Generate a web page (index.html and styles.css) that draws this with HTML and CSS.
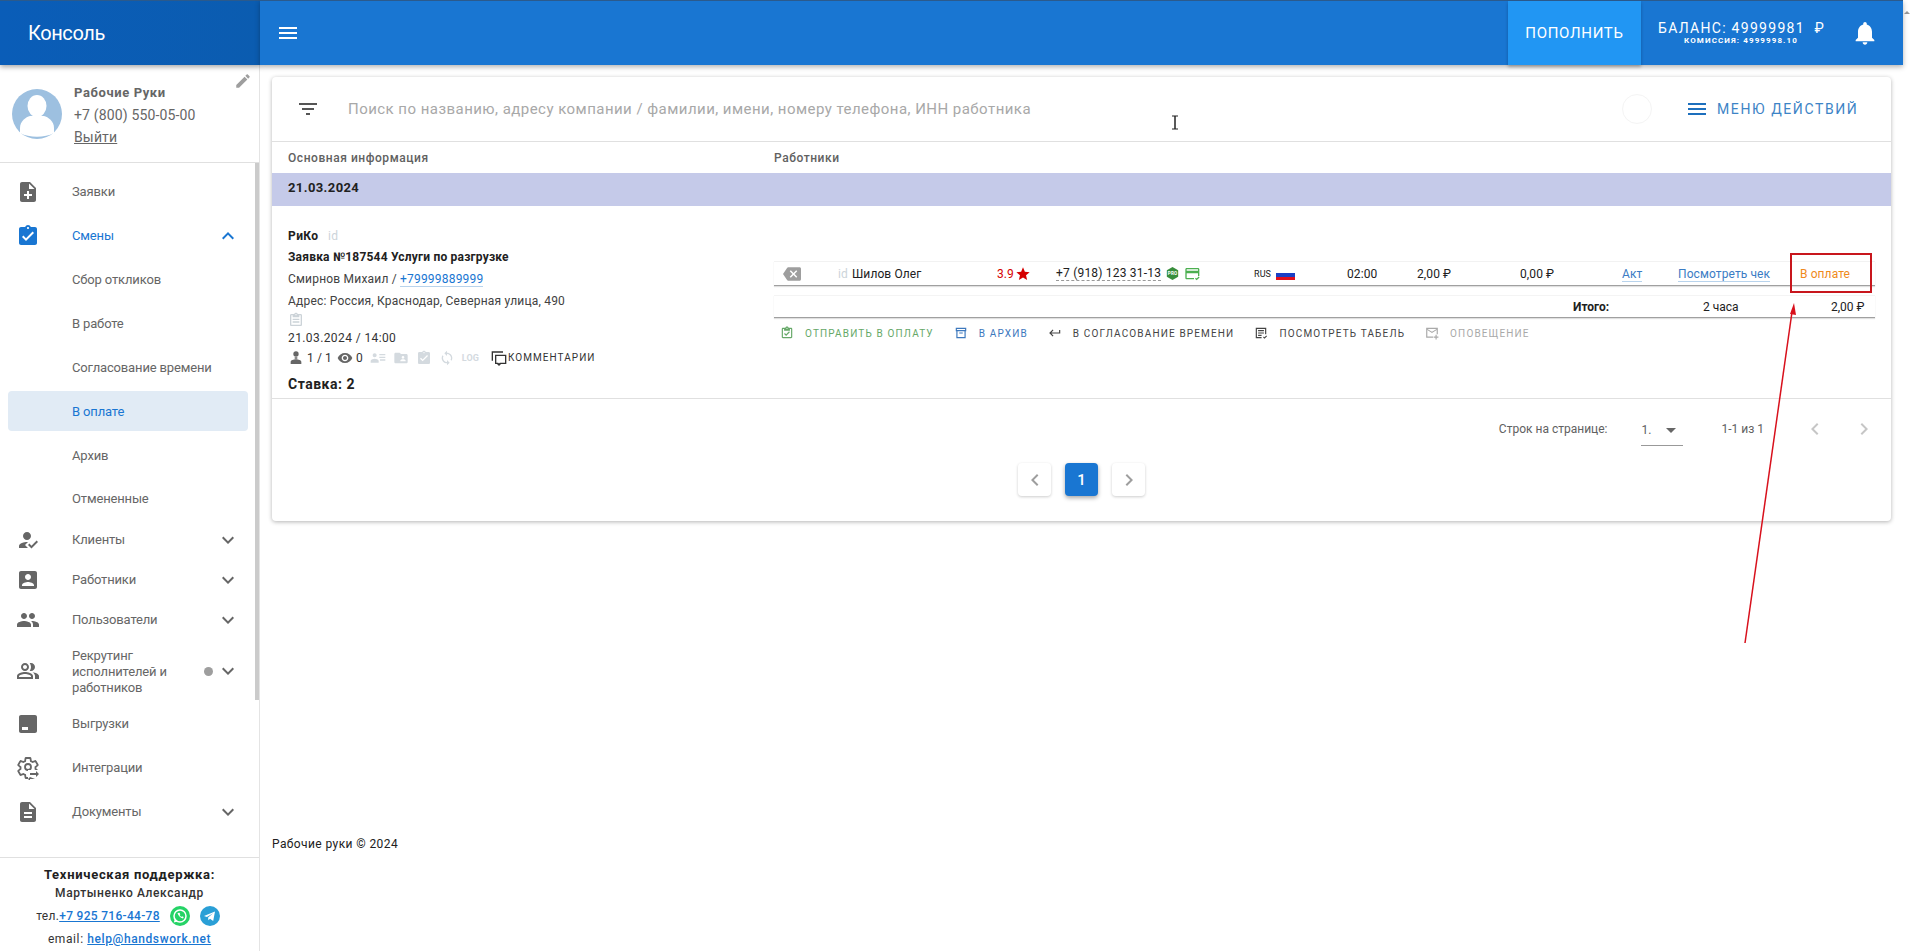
FILE: index.html
```html
<!DOCTYPE html>
<html>
<head>
    <title>Консоль</title>
    <link rel="stylesheet" href="styles.css">
</head>
<body>

<svg class="sprites">
    <symbol id="i-menu" viewBox="0 0 24 24"><path d="M3 18h18v-2H3v2zm0-5h18v-2H3v2zm0-7v2h18V6H3z"/></symbol>
    <symbol id="i-bell" viewBox="0 0 24 24"><path d="M12 22c1.1 0 2-.9 2-2h-4c0 1.1.89 2 2 2zm6-6v-5c0-3.07-1.64-5.64-4.5-6.32V4c0-.83-.67-1.5-1.5-1.5s-1.5.67-1.5 1.5v.68C7.63 5.36 6 7.92 6 11v5l-2 2v1h16v-1l-2-2z"/></symbol>
    <symbol id="i-edit" viewBox="0 0 24 24"><path d="M3 17.25V21h3.75L17.81 9.94l-3.75-3.75L3 17.25zM20.71 7.04c.39-.39.39-1.02 0-1.41l-2.34-2.34c-.39-.39-1.02-.39-1.41 0l-1.83 1.83 3.75 3.75 1.83-1.83z"/></symbol>
    <symbol id="i-note" viewBox="0 0 24 24"><path d="M14 2H6c-1.1 0-1.99.9-1.99 2L4 20c0 1.1.89 2 1.99 2H18c1.1 0 2-.9 2-2V8l-6-6zm2 14h-3v3h-2v-3H8v-2h3v-3h2v3h3v2zm-3-7V3.5L18.5 9H13z"/></symbol>
    <symbol id="i-turned" viewBox="0 0 24 24"><path d="M19 3h-4.18C14.4 1.84 13.3 1 12 1c-1.3 0-2.4.84-2.82 2H5c-1.1 0-2 .9-2 2v14c0 1.1.9 2 2 2h14c1.1 0 2-.9 2-2V5c0-1.1-.9-2-2-2zm-7 0c.55 0 1 .45 1 1s-.45 1-1 1-1-.45-1-1 .45-1 1-1zm-2 14l-4-4 1.41-1.41L10 14.17l6.59-6.59L18 9l-8 8z"/></symbol>
    <symbol id="i-reg" viewBox="0 0 24 24"><path d="M9 17l3-2.94c-.39-.04-.68-.06-1-.06-2.67 0-8 1.34-8 4v2h9l-3-3zm2-5c2.21 0 4-1.79 4-4s-1.79-4-4-4-4 1.79-4 4 1.79 4 4 4"/><path d="M15.47 20.5L12 17l1.4-1.41 2.07 2.08 5.13-5.17 1.4 1.41z"/></symbol>
    <symbol id="i-box" viewBox="0 0 24 24"><path d="M3 5v14c0 1.1.89 2 2 2h14c1.1 0 2-.9 2-2V5c0-1.1-.9-2-2-2H5c-1.11 0-2 .9-2 2zm12 4c0 1.66-1.34 3-3 3s-3-1.34-3-3 1.34-3 3-3 3 1.34 3 3zm-9 8c0-2 4-3.1 6-3.1s6 1.1 6 3.1v1H6v-1z"/></symbol>
    <symbol id="i-people" viewBox="0 0 24 24"><path d="M16 11c1.66 0 2.99-1.34 2.99-3S17.66 5 16 5c-1.66 0-3 1.34-3 3s1.34 3 3 3zm-8 0c1.66 0 2.99-1.34 2.99-3S9.66 5 8 5C6.34 5 5 6.34 5 8s1.34 3 3 3zm0 2c-2.33 0-7 1.17-7 3.5V19h14v-2.5c0-2.33-4.67-3.5-7-3.5zm8 0c-.29 0-.62.02-.97.05 1.16.84 1.97 1.97 1.97 3.45V19h6v-2.5c0-2.33-4.67-3.5-7-3.5z"/></symbol>
    <symbol id="i-people-alt" viewBox="0 0 24 24"><path d="M16.67 13.13C18.04 14.06 19 15.32 19 17v3h4v-3c0-2.18-3.57-3.47-6.33-3.87z"/><path d="M15 12c2.21 0 4-1.79 4-4s-1.79-4-4-4c-.47 0-.91.1-1.33.24C14.5 5.27 15 6.58 15 8s-.5 2.73-1.33 3.76c.42.14.86.24 1.33.24z"/><path d="M9 12c2.21 0 4-1.79 4-4s-1.79-4-4-4-4 1.79-4 4 1.79 4 4 4zm0-6c1.1 0 2 .9 2 2s-.9 2-2 2-2-.9-2-2 .9-2 2-2z"/><path d="M9 13c-2.67 0-8 1.34-8 4v3h16v-3c0-2.66-5.33-4-8-4zm6 5H3v-.99C3.2 16.29 6.3 15 9 15s5.8 1.29 6 2z"/></symbol>
    <symbol id="i-export" viewBox="0 0 24 24"><path d="M5 3h14c1.1 0 2 .9 2 2v14c0 1.1-.9 2-2 2H5c-1.1 0-2-.9-2-2V5c0-1.1.9-2 2-2zm1 12v3h6v-3H6z"/></symbol>
    <symbol id="i-gear" viewBox="0 0 24 24"><path fill="none" stroke="currentColor" stroke-width="1.8" d="M19.43 12.98c.04-.32.07-.64.07-.98s-.03-.66-.07-.98l2.11-1.65c.19-.15.24-.42.12-.64l-2-3.46c-.12-.22-.39-.3-.61-.22l-2.49 1c-.52-.4-1.08-.73-1.69-.98l-.38-2.65C14.46 2.18 14.25 2 14 2h-4c-.25 0-.46.18-.49.42l-.38 2.65c-.61.25-1.17.59-1.69.98l-2.49-1c-.23-.09-.49 0-.61.22l-2 3.46c-.13.22-.07.49.12.64l2.11 1.65c-.04.32-.07.65-.07.98s.03.66.07.98l-2.11 1.65c-.19.15-.24.42-.12.64l2 3.46c.12.22.39.3.61.22l2.49-1c.52.4 1.08.73 1.69.98l.38 2.65c.03.24.24.42.49.42h4c.25 0 .46-.18.49-.42l.38-2.65c.61-.25 1.17-.59 1.69-.98l2.49 1c.23.09.49 0 .61-.22l2-3.46c.12-.22.07-.49-.12-.64l-2.11-1.65z"/><circle cx="12" cy="11" r="3" fill="none" stroke="currentColor" stroke-width="1.8"/><path fill="#fff" d="M12 14h11v10H12z"/><path d="M14 17h6v-2l3 3-3 3v-2h-6zM19 23h-5v2l-2-2 2-2z"/></symbol>
    <symbol id="i-doc" viewBox="0 0 24 24"><path d="M14 2H6c-1.1 0-1.99.9-1.99 2L4 20c0 1.1.89 2 1.99 2H18c1.1 0 2-.9 2-2V8l-6-6zm2 16H8v-2h8v2zm0-4H8v-2h8v2zm-3-5V3.5L18.5 9H13z"/></symbol>
    <symbol id="i-more" viewBox="0 0 24 24"><path d="M16.59 8.59L12 13.17 7.41 8.59 6 10l6 6 6-6z"/></symbol>
    <symbol id="i-less" viewBox="0 0 24 24"><path d="M12 8l-6 6 1.41 1.41L12 10.83l4.59 4.58L18 14z"/></symbol>
    <symbol id="i-filter" viewBox="0 0 24 24"><path d="M10 18h4v-2h-4v2zM3 6v2h18V6H3zm3 7h12v-2H6v2z"/></symbol>
    <symbol id="i-backspace" viewBox="0 0 24 24"><path d="M22 3H7c-.69 0-1.23.35-1.59.88L0 12l5.41 8.11c.36.53.9.89 1.59.89h15c1.1 0 2-.9 2-2V5c0-1.1-.9-2-2-2zm-3 12.59L17.59 17 14 13.41 10.41 17 9 15.59 12.59 12 9 8.41 10.41 7 14 10.59 17.59 7 19 8.41 15.41 12 19 15.59z"/></symbol>
    <symbol id="i-star" viewBox="0 0 24 24"><path d="M12 17.27L18.18 21l-1.64-7.03L22 9.24l-7.19-.61L12 2 9.19 8.63 2 9.24l5.46 4.73L5.82 21z"/></symbol>
    <symbol id="i-eye" viewBox="0 0 24 24"><path d="M12 4.5C7 4.5 2.73 7.61 1 12c1.73 4.39 6 7.5 11 7.5s9.27-3.11 11-7.5c-1.73-4.39-6-7.5-11-7.5zM12 17c-2.76 0-5-2.24-5-5s2.24-5 5-5 5 2.24 5 5-2.24 5-5 5zm0-8c-1.66 0-3 1.34-3 3s1.34 3 3 3 3-1.34 3-3-1.34-3-3-3z"/></symbol>
    <symbol id="i-left" viewBox="0 0 24 24"><path d="M15.41 7.41L14 6l-6 6 6 6 1.41-1.41L10.83 12z"/></symbol>
    <symbol id="i-right" viewBox="0 0 24 24"><path d="M10 6L8.59 7.41 13.17 12l-4.58 4.59L10 18l6-6z"/></symbol>
    <symbol id="i-drop" viewBox="0 0 24 24"><path d="M7 10l5 5 5-5z"/></symbol>
    <symbol id="i-sync" viewBox="0 0 24 24"><path d="M12 4V1L8 5l4 4V6c3.31 0 6 2.69 6 6 0 1.01-.25 1.97-.7 2.8l1.46 1.46C19.54 15.03 20 13.57 20 12c0-4.42-3.58-8-8-8zm0 14c-3.31 0-6-2.69-6-6 0-1.01.25-1.97.7-2.8L5.24 7.74C4.46 8.97 4 10.43 4 12c0 4.42 3.58 8 8 8v3l4-4-4-4v3z"/></symbol>
    <symbol id="i-folder" viewBox="0 0 24 24"><path d="M20 6h-8l-2-2H4c-1.1 0-1.99.9-1.99 2L2 18c0 1.1.9 2 2 2h16c1.1 0 2-.9 2-2V8c0-1.1-.9-2-2-2zm-5 3c1.1 0 2 .9 2 2s-.9 2-2 2-2-.9-2-2 .9-2 2-2zm4 8h-8v-1c0-1.33 2.67-2 4-2s4 .67 4 2v1z"/></symbol>
    <symbol id="i-list" viewBox="0 0 24 24"><path d="M7 11c1.66 0 3-1.34 3-3S8.66 5 7 5 4 6.34 4 8s1.34 3 3 3zm0 2c-2 0-6 1-6 3.2V19h12v-2.800C13 14 9 13 7 13zM14 6h9v2h-9zM14 10h9v2h-9zM15 14h8v2h-8z"/></symbol>
    <symbol id="i-person" viewBox="0 0 24 24"><circle cx="12" cy="6" r="4"/><path d="M10 11h4v2h-4zM12 14c-3.500 0-8 1.500-8 4v3h16v-3c0-2.500-4.500-4-8-4z"/></symbol>
    <symbol id="i-clip" viewBox="0 0 24 24"><path d="M19 3h-4.180C14.400 1.840 13.300 1 12 1s-2.400.84-2.820 2H5c-1.100 0-2 .9-2 2v14c0 1.100.9 2 2 2h14c1.100 0 2-.9 2-2V5c0-1.100-.9-2-2-2zm-7 0c.55 0 1 .45 1 1s-.45 1-1 1-1-.45-1-1 .45-1 1-1zm7 16H5V5h2v3h10V5h2v14zM7 10h10v2H7zM7 14h10v2H7z"/></symbol>
    <symbol id="i-clip-ok" viewBox="0 0 24 24"><path d="M19 3h-4.180C14.400 1.840 13.300 1 12 1s-2.400.84-2.820 2H5c-1.100 0-2 .9-2 2v14c0 1.100.9 2 2 2h14c1.100 0 2-.9 2-2V5c0-1.100-.9-2-2-2zm-7 0c.55 0 1 .45 1 1s-.45 1-1 1-1-.45-1-1 .45-1 1-1zm7 16H5V5h2v3h10V5h2v14z"/><path d="M10.500 17L7 13.500l1.400-1.400 2.100 2.100 5-5 1.400 1.400z"/></symbol>
    <symbol id="i-archive" viewBox="0 0 24 24"><path d="M3 3h18v6h-1v12H4V9H3V3zm2 2v2h14V5H5zm1 4v10h12V9H6zm3 2h6v2H9z"/></symbol>
    <symbol id="i-return" viewBox="0 0 24 24"><path d="M19 7v4H5.830l3.580-3.590L8 6l-6 6 6 6 1.410-1.410L5.830 13H21V7z"/></symbol>
    <symbol id="i-sheet" viewBox="0 0 24 24"><path d="M3 3h18v11h-2V5H5v14h8v2H3V3zm4 4h10v2H7zM7 11h10v2H7zM7 15h6v2H7zM15.500 19.500l1.400-1.400 1.100 1.100 3-3 1.400 1.400-4.400 4.400z"/></symbol>
    <symbol id="i-mail" viewBox="0 0 24 24"><path d="M2 3h20v11h-2V7l-8 5-8-5v11h10v2H2V3zm2 2l8 5 8-5H4zM18 15h2v3h3v2h-3v3h-2v-3h-3v-2h3z"/></symbol>
    <symbol id="i-chat" viewBox="0 0 24 24"><path d="M1 2h17v2H3v12H1V2zm5 5h17v14h-8l-3 3-3-3H6V7zm2 2v10h2.800l1.200 1.200 1.200-1.200H21V9H8z"/></symbol>
    <symbol id="i-card" viewBox="0 0 24 24"><path d="M4 3h17c1.100 0 2 .9 2 2v10h-2v-4H4v7h11v2H4c-1.100 0-2-.9-2-2V5c0-1.100.9-2 2-2zm0 2v2h17V5H4zM16.500 19l1.400-1.400 1.100 1.100 3-3 1.400 1.400-4.400 4.400z"/></symbol>
</svg>

<div class="app">
    <div class="brand">Консоль</div>
    <header class="topbar">
        <svg class="ico burger"><use href="#i-menu"/></svg>
        <div class="topbar-right">
            <div class="refill">ПОПОЛНИТЬ</div>
            <div class="balance">
                <div class="balance-main">БАЛАНС: 49999981 &nbsp;₽</div>
                <div class="balance-sub">КОМИССИЯ: 4999998.10</div>
            </div>
            <svg class="ico bell"><use href="#i-bell"/></svg>
        </div>
    </header>

    <aside class="sidebar">
        <div class="profile">
            <svg class="avatar" viewBox="0 0 50 50">
                <circle cx="25" cy="25" r="25" fill="#9dc0e0"/>
                <ellipse cx="25" cy="17" rx="9.500" ry="11" fill="#fff"/>
                <path d="M8 44v-5c0-7 6-11 10-12h14c4 1 10 5 10 12v5c-9 5-25 5-34 0z" fill="#fff"/>
            </svg>
            <div class="profile-text">
                <div class="profile-name">Рабочие Руки</div>
                <div class="profile-line">+7 (800) 550-05-00</div>
                <div class="profile-line"><u>Выйти</u></div>
            </div>
            <svg class="ico pencil"><use href="#i-edit"/></svg>
        </div>

        <nav class="nav">
            <div class="nav-item"><svg class="ico"><use href="#i-note"/></svg><span>Заявки</span></div>
            <div class="nav-item is-open"><svg class="ico"><use href="#i-turned"/></svg><span>Смены</span><svg class="ico chev"><use href="#i-less"/></svg></div>
            <div class="nav-sub">Сбор откликов</div>
            <div class="nav-sub">В работе</div>
            <div class="nav-sub">Согласование времени</div>
            <div class="nav-sub is-current"><b>В оплате</b></div>
            <div class="nav-sub">Архив</div>
            <div class="nav-sub tail">Отмененные</div>
            <div class="nav-item short"><svg class="ico"><use href="#i-reg"/></svg><span>Клиенты</span><svg class="ico chev"><use href="#i-more"/></svg></div>
            <div class="nav-item short"><svg class="ico"><use href="#i-box"/></svg><span>Работники</span><svg class="ico chev"><use href="#i-more"/></svg></div>
            <div class="nav-item short"><svg class="ico"><use href="#i-people"/></svg><span>Пользователи</span><svg class="ico chev"><use href="#i-more"/></svg></div>
            <div class="nav-item tall"><svg class="ico"><use href="#i-people-alt"/></svg><span>Рекрутинг исполнителей и работников</span><i class="dot"></i><svg class="ico chev"><use href="#i-more"/></svg></div>
            <div class="nav-item"><svg class="ico"><use href="#i-export"/></svg><span>Выгрузки</span></div>
            <div class="nav-item"><svg class="ico"><use href="#i-gear"/></svg><span>Интеграции</span></div>
            <div class="nav-item"><svg class="ico"><use href="#i-doc"/></svg><span>Документы</span><svg class="ico chev"><use href="#i-more"/></svg></div>
            <div class="nav-thumb"></div>
        </nav>

        <div class="support">
            <div class="support-title">Техническая поддержка:</div>
            <div class="support-name">Мартыненко Александр</div>
            <div class="support-phone">
                <span>тел.<a>+7 925 716-44-78</a></span>
                <svg class="messenger" viewBox="0 0 20 20"><circle cx="10" cy="10" r="10" fill="#25d366"/><circle cx="10" cy="10" r="6" fill="none" stroke="#fff" stroke-width="1.500"/><path d="M3.800 16.500l1.200-4 3 3z" fill="#fff"/><path d="M7.500 7c1 3 2.500 4.500 5.500 5.500l.7-1.500-1.700-.8-.7.7c-.8-.4-1.300-1-1.700-1.800l.7-.7-.8-1.700z" fill="#fff"/></svg>
                <svg class="messenger" viewBox="0 0 20 20"><circle cx="10" cy="10" r="10" fill="#2a9fd6"/><path d="M4 10l11-4.500-1.800 9.500-3.200-2.300-1.600 1.600-.3-2.900 5-4.200-6.200 3.700z" fill="#fff"/></svg>
            </div>
            <div class="support-mail">email: <a>help@handswork.net</a></div>
        </div>
    </aside>

    <main class="content">
        <section class="card">
            <div class="searchbar">
                <svg class="ico filter"><use href="#i-filter"/></svg>
                <div class="placeholder">Поиск по названию, адресу компании / фамилии, имени, номеру телефона, ИНН работника</div>
                <div class="ghost"></div>
                <svg class="ico actions-ico"><use href="#i-menu"/></svg>
                <div class="actions-label">МЕНЮ ДЕЙСТВИЙ</div>
            </div>

            <div class="table-head">
                <div class="col-main">Основная информация</div>
                <div>Работники</div>
            </div>
            <div class="date-band">21.03.2024</div>

            <div class="order">
                <div class="col-main order-info">
                    <div class="info-company">РиКо <span class="muted">id</span></div>
                    <div class="info-title">Заявка №187544 Услуги по разгрузке</div>
                    <div class="info-line">Смирнов Михаил / <a class="dash-link">+79999889999</a></div>
                    <div class="info-line">Адрес: Россия, Краснодар, Северная улица, 490</div>
                    <svg class="ico clip"><use href="#i-clip"/></svg>
                    <div class="info-date">21.03.2024 / 14:00</div>
                    <div class="info-icons">
                        <svg class="ico dim"><use href="#i-person"/></svg><span class="count">1 / 1</span>
                        <svg class="ico dim eye"><use href="#i-eye"/></svg><span class="count">0</span>
                        <svg class="ico faded"><use href="#i-list"/></svg>
                        <svg class="ico faded"><use href="#i-folder"/></svg>
                        <svg class="ico faded"><use href="#i-turned"/></svg>
                        <svg class="ico faded"><use href="#i-sync"/></svg>
                        <span class="log">LOG</span>
                        <svg class="ico chat"><use href="#i-chat"/></svg><span class="comments">КОММЕНТАРИИ</span>
                    </div>
                    <div class="info-rate">Ставка: 2</div>
                </div>

                <div class="workers">
                    <div class="worker-row">
                        <svg class="ico remove"><use href="#i-backspace"/></svg>
                        <div class="worker-name"><span class="muted">id</span> Шилов Олег</div>
                        <div class="rating">3.9 <svg class="ico"><use href="#i-star"/></svg></div>
                        <div class="phone"><span>+7 (918) 123 31-13</span>
                            <svg class="pro" viewBox="0 0 20 20"><path d="M10 0l8.700 5v10L10 20l-8.700-5V5z" fill="#388e3c"/><text x="10" y="13" text-anchor="middle">PRO</text></svg>
                            <svg class="ico card-ok"><use href="#i-card"/></svg>
                        </div>
                        <div class="country">RUS <span class="flag"></span></div>
                        <div>02:00</div>
                        <div>2,00 ₽</div>
                        <div>0,00 ₽</div>
                        <div><a class="solid-link">Акт</a></div>
                        <div><a class="solid-link">Посмотреть чек</a></div>
                        <div class="status">В оплате</div>
                    </div>
                    <div class="total-row">
                        <div></div>
                        <b>Итого:</b>
                        <div>2 часа</div>
                        <div>2,00 ₽</div>
                    </div>
                    <div class="worker-actions">
                        <div class="act green"><svg class="ico"><use href="#i-clip-ok"/></svg>Отправить в оплату</div>
                        <div class="act blue"><svg class="ico"><use href="#i-archive"/></svg>В архив</div>
                        <div class="act dark"><svg class="ico"><use href="#i-return"/></svg>В согласование времени</div>
                        <div class="act dark"><svg class="ico"><use href="#i-sheet"/></svg>Посмотреть табель</div>
                        <div class="act grey"><svg class="ico"><use href="#i-mail"/></svg>Оповещение</div>
                    </div>
                </div>
            </div>

            <div class="rows-bar">
                <span>Строк на странице:</span>
                <div class="rows-select"><span>1.</span><svg class="ico"><use href="#i-drop"/></svg></div>
                <span class="rows-range">1-1 из 1</span>
                <svg class="ico off"><use href="#i-left"/></svg>
                <svg class="ico off"><use href="#i-right"/></svg>
            </div>

            <div class="pager">
                <div class="page-btn"><svg class="ico"><use href="#i-left"/></svg></div>
                <div class="page-btn active">1</div>
                <div class="page-btn"><svg class="ico"><use href="#i-right"/></svg></div>
            </div>
        </section>

        <footer class="copy">Рабочие руки © 2024</footer>
    </main>

    <div class="gutter"><i></i></div>
</div>

<!-- annotation drawn on top of the screenshot -->
<svg class="markup" viewBox="0 0 1911 951">
    <rect x="1791" y="254" width="80" height="38" fill="none" stroke="#c8161d" stroke-width="2"/>
    <path d="M1745 643L1792 312" stroke="#d8101c" stroke-width="1.500"/>
    <path d="M1794 303l-4 11 6 1z" fill="#d8101c"/>
    <path d="M1172 116h3v13h-3m6-13h-3v13h3" fill="none" stroke="#222" stroke-width="1"/>
</svg>

</body>
</html>
```

FILE: styles.css
```css
* {
    box-sizing: border-box;
}

body {
    margin: 0;
    height: 951px;
    overflow: hidden;
    background: #fff;
    color: #212121;
    font-family: Roboto, "Liberation Sans", sans-serif;
    font-size: 12px;
}

a {
    color: inherit;
}

.sprites {
    display: none;
}

.ico {
    display: block;
    flex: none;
    width: 24px;
    height: 24px;
    fill: currentColor;
}

.app {
    display: grid;
    grid-template-columns: 260px minmax(0, 1fr) 8px;
    grid-template-rows: 65px 886px;
    height: 951px;
}

/* top bar */
.brand {
    display: flex;
    align-items: center;
    padding-left: 28px;
    background: linear-gradient(90deg, #0a5db8, #0b5cb0);
    border-top: 1px solid #2b5a8c;
    color: #fff;
    font-size: 20px;
    letter-spacing: -.4px;
    box-shadow: 0 2px 5px rgba(0, 0, 0, .35);
    z-index: 2;
}

.topbar {
    display: flex;
    align-items: center;
    justify-content: space-between;
    padding-left: 16px;
    background: #1976d2;
    border-top: 1px solid #2b5a8c;
    color: #fff;
    box-shadow: 0 2px 5px rgba(0, 0, 0, .3);
    z-index: 2;
}

.burger {
    width: 24px;
}

.topbar-right {
    display: flex;
    align-items: center;
    height: 100%;
}

.refill {
    display: flex;
    align-items: center;
    width: 133px;
    height: 100%;
    justify-content: center;
    background: #2196f3;
    font-size: 15px;
    letter-spacing: .7px;
    box-shadow: 0 2px 3px rgba(0, 0, 0, .25);
}

.balance {
    width: 210px;
    padding: 0 27px 0 17px;
    text-align: center;
}

.balance-main {
    font-size: 14px;
    letter-spacing: 1.3px;
    line-height: 15px;
    white-space: nowrap;
    text-align: left;
}

.balance-sub {
    font-size: 8px;
    font-weight: 700;
    letter-spacing: 1.1px;
    line-height: 10px;
}

.bell {
    width: 28px;
    height: 28px;
    margin-right: 24px;
}

/* sidebar */
.sidebar {
    display: flex;
    flex-direction: column;
    position: relative;
    border-right: 1px solid #e4e4e4;
    color: #666;
    font-size: 13px;
}

.profile {
    display: flex;
    position: relative;
    height: 98px;
    padding: 24px 0 0 12px;
    border-bottom: 1px solid #e0e0e0;
}

.avatar {
    flex: none;
    width: 50px;
    height: 50px;
}

.profile-text {
    margin-left: 12px;
    margin-top: -7px;
    font-size: 14px;
    line-height: 22px;
    letter-spacing: .15px;
}

.profile-name {
    font-size: 13px;
    font-weight: 700;
    letter-spacing: .6px;
}

.pencil {
    position: absolute;
    top: 7px;
    right: 7px;
    width: 18px;
    height: 18px;
    color: #9e9e9e;
}

.nav {
    position: relative;
    flex: 1;
    padding-top: 7px;
}

.nav-thumb {
    position: absolute;
    top: 0;
    right: 0;
    width: 4px;
    height: 537px;
    background: #cbcbcb;
}

.nav-item {
    display: flex;
    align-items: center;
    height: 44px;
    padding-left: 16px;
    line-height: 16px;
}

.nav-item > span {
    margin-left: 32px;
    width: 104px;
    letter-spacing: -.15px;
}

.nav-item > .ico {
    color: #666;
}

.nav-item.short {
    height: 40px;
}

.nav-item.tall {
    height: 62px;
}

.nav-item.tall > span {
    margin-top: 2px;
}

.nav-item.is-open {
    height: 43px;
}

.nav-item.is-open,
.nav-item.is-open > .ico {
    color: #1976d2;
}

.nav-item > .chev {
    position: absolute;
    left: 216px;
}

.dot {
    position: absolute;
    left: 204px;
    width: 9px;
    height: 9px;
    border-radius: 50%;
    background: #9e9e9e;
}

.nav-sub {
    display: flex;
    align-items: center;
    height: 44px;
    padding-left: 72px;
    letter-spacing: -.15px;
}

.nav-sub.tail {
    height: 43px;
}

.nav-sub b {
    font-weight: 400;
}

.nav-sub.is-current {
    height: 40px;
    margin: 2px 11px 2px 8px;
    padding-left: 64px;
    border-radius: 4px;
    background: #e1ebf5;
    color: #1976d2;
}

.support {
    height: 94px;
    padding-top: 7px;
    border-top: 1px solid #e0e0e0;
    color: #333;
    text-align: center;
    letter-spacing: .6px;
}

.support-title {
    font-size: 13px;
    font-weight: 700;
    line-height: 19px;
    color: #212121;
    letter-spacing: .7px;
}

.support-name {
    font-size: 12px;
    font-weight: 500;
    line-height: 19px;
}

.support-phone {
    display: flex;
    align-items: center;
    justify-content: center;
    gap: 4px;
    height: 25px;
    padding-right: 3px;
    font-size: 12px;
    letter-spacing: .3px;
}

.support-phone a,
.support-mail a {
    color: #1976d2;
    font-weight: 500;
    text-decoration: underline;
}

.messenger {
    width: 20px;
    height: 20px;
    margin-left: 6px;
}

.support-mail {
    margin-top: 1px;
    font-size: 12px;
    line-height: 21px;
}

/* main card */
.content {
    padding: 12px 12px 0;
}

.card {
    height: 444px;
    background: #fff;
    border-radius: 4px;
    box-shadow: 0 1px 4px rgba(0, 0, 0, .3);
}

.searchbar {
    display: flex;
    align-items: center;
    height: 65px;
    border-bottom: 1px solid #e0e0e0;
}

.filter {
    margin-left: 24px;
    color: #555;
}

.placeholder {
    margin-left: 28px;
    flex: 1;
    color: #a8a8a8;
    font-size: 15px;
    letter-spacing: .46px;
}

.ghost {
    width: 30px;
    height: 30px;
    margin-right: 33px;
    border: 1px solid #f4f4f4;
    border-radius: 50%;
}

.actions-ico {
    color: #1d6fbd;
}

.actions-label {
    width: 182px;
    padding-left: 8px;
    color: #3d84c6;
    font-size: 14px;
    letter-spacing: 1.6px;
}

.table-head {
    display: flex;
    align-items: center;
    height: 31px;
    color: #616161;
    font-weight: 500;
    letter-spacing: .55px;
}

.col-main {
    width: 502px;
    padding-left: 16px;
    flex: none;
}

.date-band {
    height: 33px;
    padding-left: 16px;
    background: #c5cae9;
    font-size: 13px;
    font-weight: 700;
    letter-spacing: .4px;
    line-height: 29px;
}

.order {
    display: flex;
    height: 193px;
    border-bottom: 1px solid #e0e0e0;
}

.order-info {
    padding-top: 20px;
    line-height: 22px;
}

.info-company {
    font-weight: 700;
    letter-spacing: .4px;
    line-height: 20px;
}

.muted {
    margin-left: 6px;
    color: #ccd4da;
    font-weight: 400;
}

.info-title {
    font-weight: 700;
    letter-spacing: .2px;
}

.info-line {
    color: #424242;
    letter-spacing: .2px;
}

.dash-link {
    color: #1976d2;
    border-bottom: 1px solid #b8d3ec;
}

.clip {
    width: 16px;
    height: 16px;
    color: #ccd3d8;
}

.info-date {
    line-height: 20px;
    color: #333;
    letter-spacing: .4px;
}

.info-icons {
    display: flex;
    align-items: center;
    height: 20px;
    color: #333;
    letter-spacing: .1px;
}

.info-icons .ico {
    width: 16px;
    height: 16px;
}

.dim {
    color: #666;
}

.info-icons .eye {
    margin-left: 5px;
}

.count {
    margin-left: 3px;
}

.faded {
    margin-left: 7px;
    color: #d4dadf;
}

.log {
    margin-left: 7px;
    color: #d4dadf;
    font-size: 9px;
    font-weight: 700;
}

.info-icons .chat {
    margin-left: 12px;
    color: #333;
}

.comments {
    margin-left: 1px;
    font-size: 10px;
    letter-spacing: 1.05px;
    color: #333;
}

.info-rate {
    margin-top: 5px;
    font-size: 14px;
    font-weight: 700;
    letter-spacing: .5px;
}

/* workers table */
.workers {
    flex: 1;
    min-width: 0;
    padding: 55px 16px 0 0;
}

.worker-row,
.total-row {
    display: grid;
    align-items: center;
    border-bottom: 1px solid #a0a0a0;
    box-shadow: 0 1px 1px rgba(0, 0, 0, .12);
}

.worker-row {
    grid-template-columns: 64px 159px 58px 199px 93px 70px 103px 102px 56px 122px 1fr;
    height: 25px;
    border-top: 1px solid #f2f2f2;
    letter-spacing: .1px;
}

.remove {
    width: 18px;
    height: 18px;
    margin-left: 9px;
    color: #9e9e9e;
}

.worker-name .muted {
    margin-left: 0;
    margin-right: 1px;
}

.rating {
    display: flex;
    align-items: center;
    gap: 1px;
    color: #d50000;
}

.rating .ico {
    width: 16px;
    height: 16px;
}

.phone {
    display: flex;
    align-items: center;
    gap: 5px;
    margin-left: 1px;
    letter-spacing: .2px;
}

.phone > span {
    border-bottom: 1px dashed #999;
}

.pro {
    width: 13px;
    height: 13px;
}

.pro text {
    fill: #fff;
    font-size: 7px;
    font-weight: 700;
}

.card-ok {
    width: 16px;
    height: 16px;
    color: #4caf50;
}

.country {
    display: flex;
    align-items: center;
    gap: 5px;
    font-size: 9px;
}

.flag {
    width: 19px;
    height: 10px;
    margin-top: 2px;
    background: linear-gradient(#fff 33%, #1a3fc4 33% 66%, #e0101c 66%);
}

.solid-link {
    color: #3b7cc4;
    border-bottom: 1px solid #b8d3ec;
}

.status {
    color: #ef8a1d;
}

.total-row {
    grid-template-columns: 799px 130px 128px 1fr;
    height: 23px;
    margin-top: 9px;
    border-top: 1px solid #f4f4f4;
}

.worker-actions {
    display: flex;
    align-items: center;
    height: 30px;
    padding-left: 6px;
}

.act {
    display: flex;
    align-items: center;
    gap: 11px;
    margin-right: 20px;
    font-size: 10px;
    letter-spacing: 1.15px;
    text-transform: uppercase;
}

.act .ico {
    width: 14px;
    height: 14px;
}

.green {
    color: #66a868;
}

.blue {
    color: #3d78bd;
}

.dark {
    color: #444;
}

.grey {
    color: #a9a9a9;
}

/* pagination */
.rows-bar {
    display: flex;
    align-items: center;
    justify-content: flex-end;
    height: 60px;
    padding-right: 15px;
    color: #616161;
}

.rows-select {
    display: flex;
    align-items: center;
    justify-content: space-between;
    width: 42px;
    height: 30px;
    margin-left: 34px;
    margin-top: 3px;
    border-bottom: 1px solid #999;
}

.rows-select .ico {
    color: #666;
}

.rows-range {
    margin: 0 39px 0 38px;
}

.off {
    color: #c6c6c6;
    margin-left: 0;
}

.rows-bar .off + .off {
    margin-left: 25px;
}

.pager {
    display: flex;
    justify-content: center;
    gap: 14px;
    padding-top: 4px;
}

.page-btn {
    display: flex;
    align-items: center;
    justify-content: center;
    width: 33px;
    height: 33px;
    border-radius: 4px;
    color: #9e9e9e;
    box-shadow: 0 1px 3px rgba(0, 0, 0, .2);
}

.page-btn.active {
    background: #1976d2;
    color: #fff;
    font-size: 15px;
    font-weight: 500;
    box-shadow: 0 2px 4px rgba(0, 0, 0, .35);
}

.copy {
    margin-top: 315px;
    letter-spacing: .4px;
    line-height: 16px;
}

.gutter {
    position: relative;
    grid-column: 3;
    grid-row: 1 / span 2;
    background: #fff;
}

.gutter i {
    position: absolute;
    top: 8px;
    left: 1px;
    border: 3px solid transparent;
    border-bottom-color: #999;
}

.markup {
    position: absolute;
    top: 0;
    left: 0;
    width: 1911px;
    height: 951px;
    pointer-events: none;
}
```
